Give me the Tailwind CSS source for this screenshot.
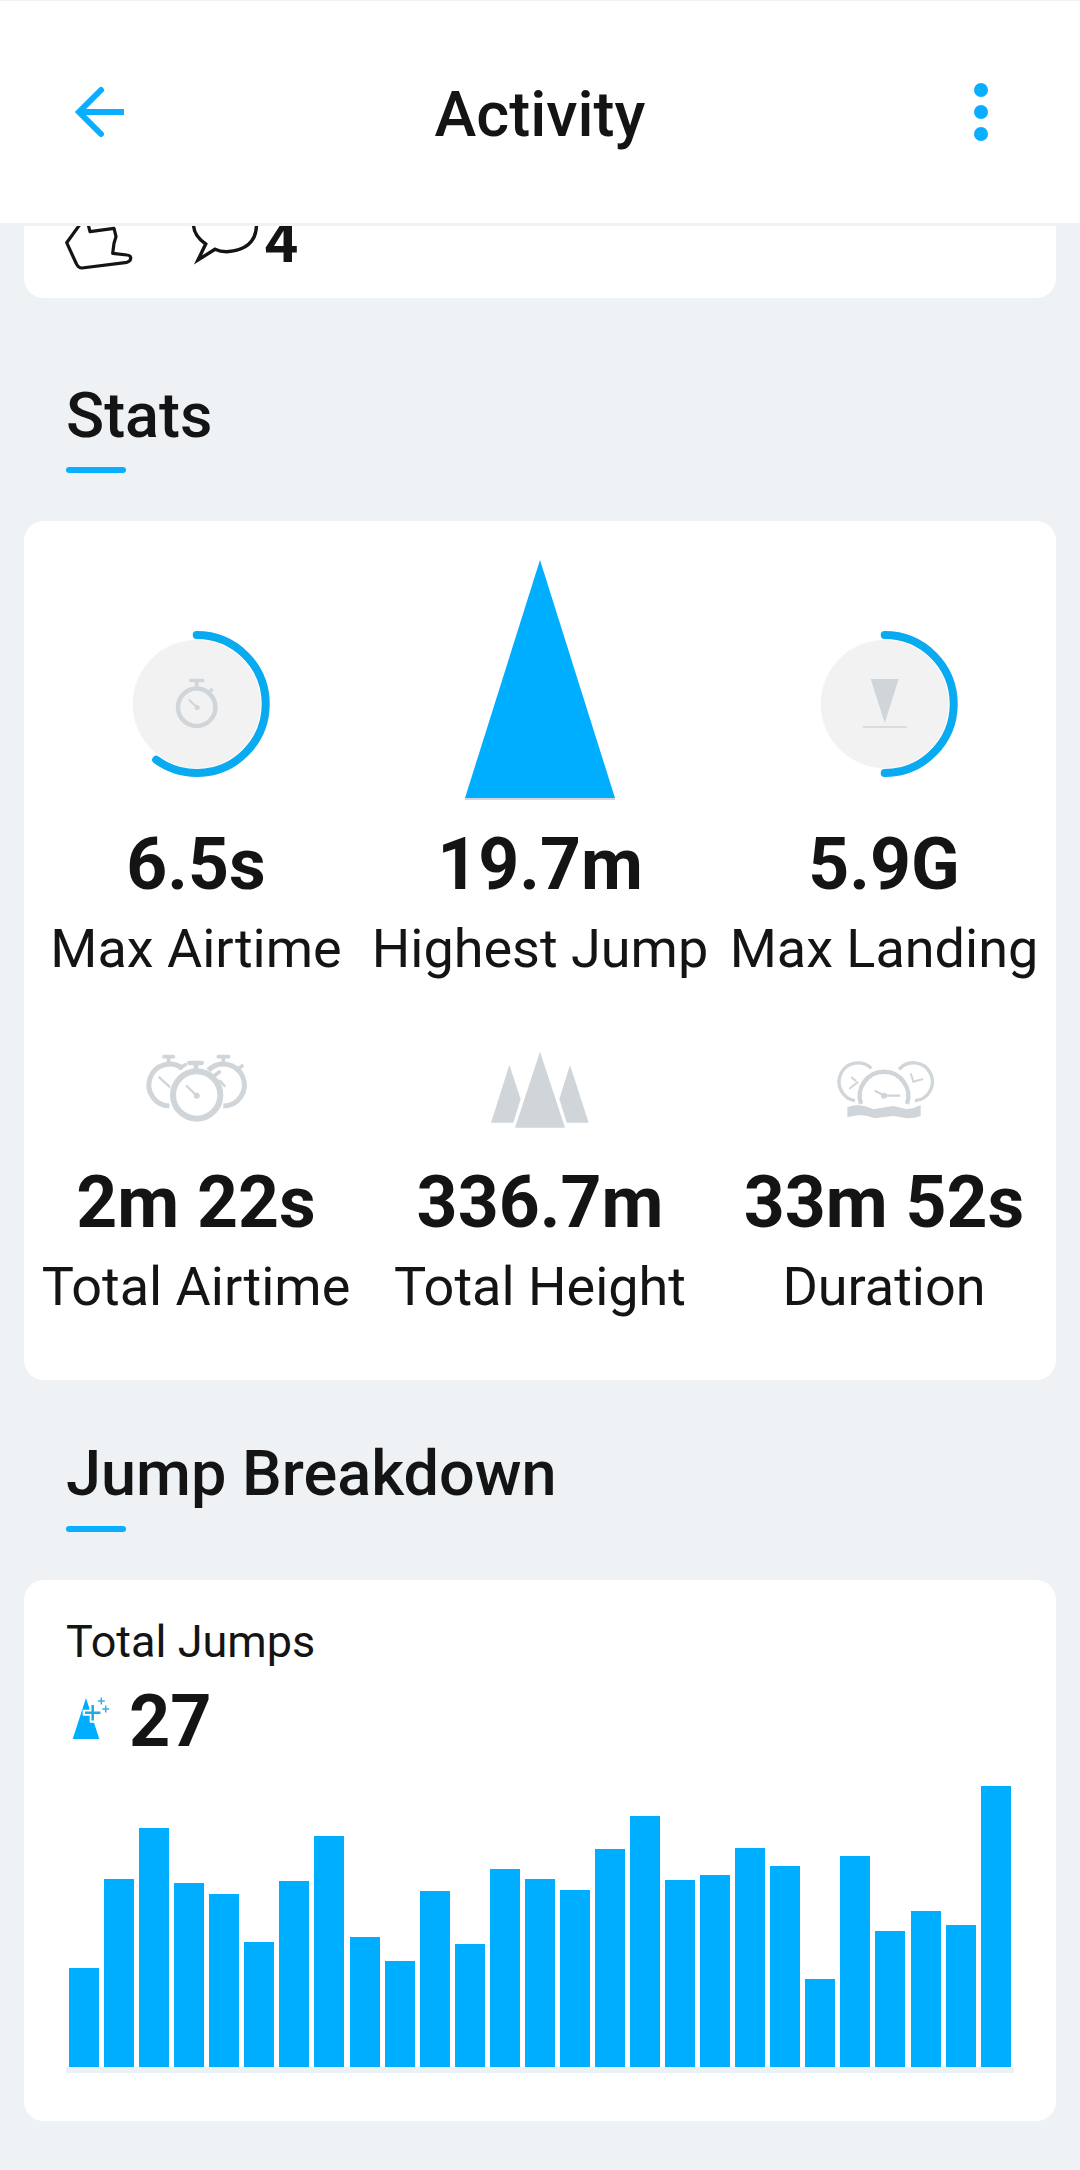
<!DOCTYPE html>
<html lang="en">
<head>
  <meta charset="UTF-8">
  <meta name="viewport" content="width=device-width, initial-scale=1.0">
  <title>Activity</title>
  <script src="https://cdn.jsdelivr.net/npm/@tailwindcss/browser@4"></script>
</head>
<body class="bg-[#eff2f5] font-['Roboto',sans-serif] text-[#141414]">
  <div class="w-[1080px] h-[2170px] overflow-hidden">
    <!-- top bar -->
    <header class="h-[223px] bg-white border-t border-[#eff2f5] flex items-center justify-between px-[60px]">
      <svg width="80" height="80" viewBox="0 0 80 80" fill="none" stroke="#0aaeff" stroke-width="6">
        <path d="M64 40H19"/><path d="M41 18L19 40L41 62" stroke-linecap="round" stroke-linejoin="miter"/>
      </svg>
      <h1 class="text-[63px] leading-[70px] font-medium pt-[6px]">Activity</h1>
      <svg width="80" height="80" viewBox="0 0 80 80" fill="#0aaeff">
        <circle cx="41" cy="18" r="7"/><circle cx="41" cy="40" r="7"/><circle cx="41" cy="62" r="7"/>
      </svg>
    </header>

    <main class="px-[24px] pt-[3px]">
      <!-- clipped post card -->
      <div class="bg-white rounded-b-[20px] h-[72px] overflow-hidden flex items-start">
        <svg class="ml-[36px]" width="80" height="44" viewBox="60 226 80 44" fill="none" stroke="#141414" stroke-width="3.2" stroke-linejoin="round">
          <path d="M79.5 225L66.7 242.7L76 263Q78 268 82 268L127 262.3Q131 261 130.7 257.5Q130 255 127 255L112.7 253.3L114 243.3L116 236.7L114 228.3L90 231.7L88.3 225"/>
        </svg>
        <svg class="ml-[50px]" width="70" height="44" viewBox="190 226 70 44" fill="none" stroke="#141414" stroke-width="3.4">
          <path d="M193.5 225Q194 236 205.7 244L198 260L215 249.3Q220 251.7 226.7 251.7Q256 250 256.5 225"/>
        </svg>
        <span class="ml-[4px] text-[60px] leading-[31px] font-bold">4</span>
      </div>

      <h2 class="ml-[42px] mt-[83px] text-[63px] leading-[70px] font-medium">Stats</h2>
      <div class="ml-[42px] mt-[16px] w-[60px] h-[6px] rounded-full bg-[#0aaeff]"></div>

      <!-- stats card -->
      <section class="mt-[48px] bg-white rounded-[20px] h-[859px] grid grid-cols-3 content-start pt-[39px]">
        <div class="flex flex-col items-center">
          <div class="h-[240px] flex items-end pb-[21px]">
            <svg width="150" height="150" viewBox="-0.7 0 150 150" fill="none">
              <circle cx="75" cy="75" r="64" fill="#f2f2f2"/>
              <circle cx="75" cy="75" r="69" stroke="#0aaaf0" stroke-width="8" stroke-linecap="round" pathLength="100" stroke-dasharray="60 100" transform="rotate(-90 75 75)"/>
              <g stroke="#d0d5d9">
                <circle cx="75" cy="78.3" r="18.7" stroke-width="4.5"/>
                <path d="M69 51.5H81" stroke-width="3.5" stroke-linecap="round"/>
                <path d="M75 52V59M86 64L91 60" stroke-width="3.5"/>
                <path d="M67 70.5L75.5 78.5" stroke-width="2"/>
              </g>
              <circle cx="75.5" cy="78.5" r="2.5" fill="#d0d5d9"/>
            </svg>
          </div>
          <div class="mt-[25px] text-[71.5px] leading-[80px] font-bold">6.5s</div>
          <div class="mt-[12px] text-[54px] leading-[64px]">Max Airtime</div>
        </div>
        <div class="flex flex-col items-center">
          <div class="h-[240px] flex items-end">
            <svg width="150" height="240" viewBox="0 0 150 240">
              <polygon points="75,0 0,238 150,238" fill="#00aeff"/>
              <path d="M0 239H150" stroke="#d0d5d9" stroke-width="2"/>
            </svg>
          </div>
          <div class="mt-[25px] text-[71.5px] leading-[80px] font-bold">19.7m</div>
          <div class="mt-[12px] text-[54px] leading-[64px]">Highest Jump</div>
        </div>
        <div class="flex flex-col items-center">
          <div class="h-[240px] flex items-end pb-[21px]">
            <svg width="150" height="150" viewBox="-0.7 0 150 150" fill="none">
              <circle cx="75" cy="75" r="64" fill="#f2f2f2"/>
              <circle cx="75" cy="75" r="69" stroke="#0aaaf0" stroke-width="8" stroke-linecap="round" pathLength="100" stroke-dasharray="50 100" transform="rotate(-90 75 75)"/>
              <polygon points="61,50 89,50 75,94" fill="#d0d5d9"/>
              <path d="M53 98H97" stroke="#d0d5d9" stroke-width="1.5"/>
            </svg>
          </div>
          <div class="mt-[25px] text-[71.5px] leading-[80px] font-bold">5.9G</div>
          <div class="mt-[12px] text-[54px] leading-[64px]">Max Landing</div>
        </div>

        <div class="flex flex-col items-center pt-[49px]">
          <svg width="150" height="110" viewBox="3 0 450 330" fill="none" stroke="#d0d5d9">
            <path d="M188 115A63 63 0 1 0 148 228" stroke-width="15"/>
            <path d="M265 121A63 63 0 1 1 310 228" stroke-width="15"/>
            <circle cx="230" cy="195" r="71" stroke-width="18" fill="#fff"/>
            <path d="M132 80H160M146 80V103M180 115L196 104M295 80H326M310 80V103M350 120L366 108M282 138L298 126" stroke-width="11" stroke-linecap="round"/>
            <path d="M208 99H245M228 99V125" stroke-width="14" stroke-linecap="round"/>
            <path d="M118 142L148 170M300 152L314 168M200 168L230 197" stroke-width="7" stroke-linecap="round"/>
            <circle cx="230" cy="197" r="9" fill="#d0d5d9" stroke="none"/>
          </svg>
          <div class="mt-[23px] text-[71.5px] leading-[80px] font-bold">2m 22s</div>
          <div class="mt-[12px] text-[54px] leading-[64px]">Total Airtime</div>
        </div>
        <div class="flex flex-col items-center pt-[49px]">
          <svg width="150" height="110" viewBox="-15 0 450 330" fill="#d0d5d9">
            <polygon points="210,65 135,293 285,293"/>
            <polygon points="118,105 63,278 130,278 152,207"/>
            <polygon points="300,105 356,278 290,278 268,207"/>
          </svg>
          <div class="mt-[23px] text-[71.5px] leading-[80px] font-bold">336.7m</div>
          <div class="mt-[12px] text-[54px] leading-[64px]">Total Height</div>
        </div>
        <div class="flex flex-col items-center pt-[49px]">
          <svg width="150" height="110" viewBox="-3 0 450 330" fill="none" stroke="#d0d5d9">
            <path d="M135 212A57 57 0 1 1 184 115" stroke-width="10"/>
            <path d="M267 118A57 57 0 1 1 315 212" stroke-width="10"/>
            <path d="M153 222A73 73 0 1 1 291 222" stroke-width="13"/>
            <path d="M120 175L143 157M125 143L137 152M310 155L337 148M303 132L310 155" stroke-width="6" stroke-linecap="round"/>
            <path d="M197 183L222 197H268" stroke-width="7" stroke-linecap="round"/>
            <circle cx="222" cy="197" r="9" fill="#d0d5d9" stroke="none"/>
            <path d="M112 232Q126 226 140 226Q165 226 190 238Q220 232 250 228Q270 232 290 238Q312 236 332 225V258Q312 266 290 265Q270 260 250 258Q222 260 195 265Q172 256 150 255Q130 258 112 262Z" fill="#d0d5d9" stroke="none"/>
          </svg>
          <div class="mt-[23px] text-[71.5px] leading-[80px] font-bold">33m 52s</div>
          <div class="mt-[12px] text-[54px] leading-[64px]">Duration</div>
        </div>
      </section>

      <h2 class="ml-[42px] mt-[59px] text-[63px] leading-[70px] font-medium">Jump Breakdown</h2>
      <div class="ml-[42px] mt-[17px] w-[60px] h-[6px] rounded-full bg-[#0aaeff]"></div>

      <!-- jumps card -->
      <section class="mt-[48px] bg-white rounded-[20px] h-[541px] px-[42px] pt-[37px]">
        <div class="text-[45px] leading-[50px]">Total Jumps</div>
        <div class="mt-[15px] flex items-center h-[80px]">
          <svg class="ml-[-2px]" width="50" height="60" viewBox="0 0 50 60">
            <polygon points="22,6 8.7,47 35.3,47" fill="#00aeff"/>
            <path d="M28.7 10.7V30.7M18.7 20.7H38.7" stroke="#fff" stroke-width="6"/>
            <path d="M28.7 13V28.4M21 20.7H36.4" stroke="#1fa9e6" stroke-width="2.5"/>
            <path d="M37.3 5.5V12.5M33.8 9H40.8M41.7 13.5V20.5M38.2 17H45.2" stroke="#3aaee0" stroke-width="1.5"/>
          </svg>
          <span class="ml-[15px] text-[72px] leading-[80px] font-bold">27</span>
        </div>
        <div id="bars" class="mt-[5px] h-[306px] border-b-[6px] border-[#ebf2f6] px-[3px] flex items-end justify-between"></div>
      </section>
    </main>
  </div>
  <script>
    const heights = [99, 188, 239, 184, 173, 125, 186, 231, 130, 106, 176, 123, 198, 188, 177, 218, 251, 187, 192, 219, 201, 88, 211, 136, 156, 142, 281];
    const barsEl = document.getElementById("bars");
    heights.forEach((h) => {
      const el = document.createElement("div");
      el.className = "w-[30px] bg-[#00aeff]";
      el.style.height = h + "px";
      barsEl.appendChild(el);
    });
  </script>
</body>
</html>
